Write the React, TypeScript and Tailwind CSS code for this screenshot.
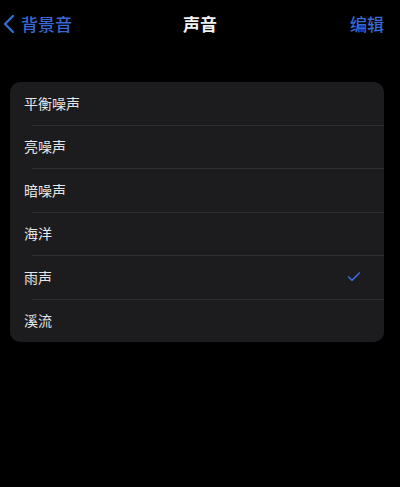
import { Check } from 'lucide-react';

const items = ['平衡噪声', '亮噪声', '暗噪声', '海洋', '雨声', '溪流'];
const selected = '雨声';

export default function App() {
    return (
        <div
            className="w-[400px] h-[487px] bg-black text-white"
            style={{ fontFamily: '"Noto Sans CJK SC", "Noto Sans", sans-serif' }}
        >
            {/* nav bar */}
            <div className="relative flex items-center justify-between h-[48px] pl-[3px] pr-[16px]">
                <button className="flex items-center gap-[6px] text-[#3868d4]">
                    <svg width="12" height="20" viewBox="0 0 12 20" fill="none">
                        <path d="M10 2L2 10L10 18" stroke="currentColor" strokeWidth="2.4" strokeLinecap="round" strokeLinejoin="round" />
                    </svg>
                    <span className="text-[17px] font-medium">背景音</span>
                </button>
                <div className="absolute left-1/2 -translate-x-1/2 text-[17px] font-semibold text-[#f2f2f2]">声音</div>
                <button className="text-[17px] font-medium text-[#3868d4]">编辑</button>
            </div>

            {/* list */}
            <div className="mt-[34px] ml-[10px] mr-[16px] rounded-[10px] bg-[#1c1c1e] overflow-hidden">
                {items.map((name, i) => (
                    <div key={name}>
                        <div className="flex items-center justify-between h-[42.5px] pl-[14px] pr-[22px]">
                            <span className="text-[14px] text-[#e6e6e6]">{name}</span>
                            {name === selected && <Check className="w-[16px] h-[16px] text-[#3868d4]" strokeWidth={2.5} />}
                        </div>
                        {i < items.length - 1 && <div className="ml-[22px] h-px bg-[#2f2f32]" />}
                    </div>
                ))}
            </div>
        </div>
    );
}
